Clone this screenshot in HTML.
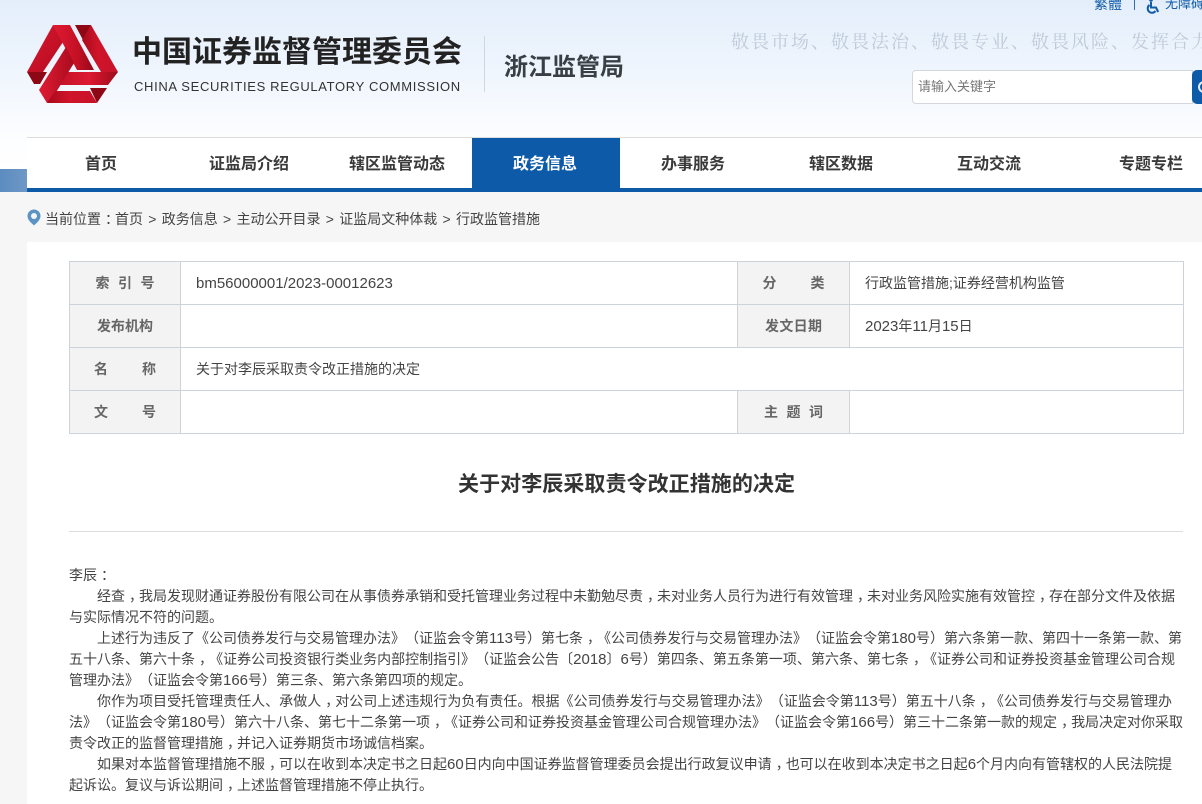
<!DOCTYPE html>
<html lang="zh-CN">
<head>
<meta charset="utf-8">
<title>关于对李辰采取责令改正措施的决定</title>
<style>
html,body{margin:0;padding:0;}
body{width:1202px;height:804px;overflow:hidden;position:relative;background:#f6f6f6;font-family:"Liberation Sans","Noto Sans CJK SC",sans-serif;color:#444;text-spacing-trim:space-all;font-feature-settings:"palt" 0;}
.a{position:absolute;white-space:nowrap;}
#hd{position:absolute;left:0;top:0;width:1202px;height:169px;background:linear-gradient(#e4eefb 0,#edf4fd 60px,#fcfdff 135px,#fff 169px);}
.j{text-align:justify;text-align-last:justify;}
#nav{position:absolute;left:27px;top:137px;width:1175px;height:51px;background:#fff;border-top:1px solid #ddd;box-sizing:border-box;}
#navbar{position:absolute;left:27px;top:188px;width:1175px;height:4px;background:#0d5aa9;}
.n{position:absolute;top:140px;height:50px;line-height:50px;width:148px;text-align:center;font-size:16px;font-weight:bold;color:#3a3a3a;}
#main{position:absolute;left:27px;top:242px;width:1175px;height:562px;background:#fff;}
table{position:absolute;left:69px;top:261px;width:1114px;border-collapse:collapse;table-layout:fixed;}
td{border:1px solid #cdd3da;height:42px;padding:0;font-size:14px;color:#444;box-sizing:border-box;}
td.l{background:#f3f3f3;text-align:center;font-weight:bold;color:#666;}
td.v{padding-left:15px;}
td.l span{display:inline-block;text-align:justify;text-align-last:justify;vertical-align:middle;}
.p{position:absolute;height:21px;line-height:21px;font-size:14px;color:#444;white-space:nowrap;}
.c{position:relative;left:4px;}
.d{font-size:15px;}
</style>
</head>
<body>
<div id="hd"></div>

<svg class="a" style="left:0;top:0" width="130" height="115" viewBox="0 0 130 115">
<defs>
<linearGradient id="g1" x1="0" y1="0" x2="1" y2="1"><stop offset="0" stop-color="#d8172f"/><stop offset="1" stop-color="#b50d20"/></linearGradient>
<linearGradient id="g2" x1="0" y1="0" x2="1" y2="0"><stop offset="0" stop-color="#e01a33"/><stop offset=".6" stop-color="#c41024"/><stop offset="1" stop-color="#96081a"/></linearGradient>
<linearGradient id="g3" x1="0" y1="0" x2="1" y2="0"><stop offset="0" stop-color="#a80a1c"/><stop offset=".45" stop-color="#d0142a"/><stop offset="1" stop-color="#c71229"/></linearGradient>
<linearGradient id="g4" x1="0" y1="0" x2="1" y2="0"><stop offset="0" stop-color="#c6112a"/><stop offset=".5" stop-color="#dc1a32"/><stop offset="1" stop-color="#9c0a1b"/></linearGradient>
<linearGradient id="g5" x1="0" y1="0" x2="1" y2="0"><stop offset="0" stop-color="#e01c34"/><stop offset="1" stop-color="#a90b1e"/></linearGradient>
</defs>
<polygon fill="#8d0714" points="27,72 47,72 40,84 34,84"/>
<polygon fill="#8d0714" points="75,25 91,25 83,40"/>
<polygon fill="#8d0714" points="90,88 107,88 97,103"/>
<polygon fill="url(#g1)" points="53,25 63,42 43,72 27,72"/>
<polygon fill="url(#g2)" points="53,25 70,25 94,70 77,70"/>
<polygon fill="url(#g3)" points="91,25 118,72 101,72 82,40"/>
<polygon fill="url(#g4)" points="118,72 108,85 60,85 67,72"/>
<polygon fill="url(#g5)" points="66,47 74,63 55,94 47,103 39,90"/>
<polygon fill="url(#g3)" points="47,103 55,91 90,91 97,103"/>
</svg>

<div class="a j" style="left:132px;top:31px;width:330px;font-size:30px;line-height:44px;font-weight:bold;color:#222;">中国证券监督管理委员会</div>
<div class="a" style="left:134px;top:79px;font-size:13px;line-height:16px;color:#333;letter-spacing:.66px;">CHINA SECURITIES REGULATORY COMMISSION</div>
<div class="a" style="left:484px;top:36px;width:1px;height:56px;background:#cfd6de;"></div>
<div class="a" style="left:504px;top:50px;font-size:24px;line-height:36px;font-weight:bold;color:#3a3f45;">浙江监管局</div>

<div class="a" style="left:1094px;top:-5px;font-size:14px;line-height:18px;color:#0f5ba8;">繁體</div>
<div class="a" style="left:1134px;top:0;width:1px;height:10px;background:#2d6db0;"></div>
<svg class="a" style="left:1145px;top:-2px" width="17" height="16" viewBox="0 0 17 16"><circle cx="6" cy="2" r="1.800" fill="#0f5ba8"/><path d="M6 4v5.500h5l2.200 4.500 M4.500 7a4.300 4.300 0 1 0 6 6" fill="none" stroke="#0f5ba8" stroke-width="2"/></svg>
<div class="a" style="left:1165px;top:-5px;font-size:13px;line-height:18px;color:#0f5ba8;">无障碍</div>

<div class="a" style="left:731px;top:30px;font-size:18px;line-height:24px;letter-spacing:2px;color:#bfcad8;font-family:'Liberation Serif','Noto Serif CJK SC',serif;">敬畏市场、敬畏法治、敬畏专业、敬畏风险、发挥合力</div>

<div class="a" style="left:912px;top:70px;width:281px;height:34px;background:#fff;border:1px solid #d4d8dd;border-radius:4px 0 0 4px;box-sizing:border-box;"></div>
<div class="a" style="left:918px;top:78px;font-size:13px;line-height:18px;color:#777;">请输入关键字</div>
<div class="a" style="left:1192px;top:70px;width:10px;height:34px;background:#0d5aa9;border-radius:5px 0 0 5px;"></div>
<div class="a" style="left:1198px;top:81px;width:12px;height:12px;border:2px solid #e6eef7;border-radius:50%;box-sizing:border-box;"></div>

<div class="a" style="left:0;top:169px;width:27px;height:23px;background:linear-gradient(90deg,#5c8cc0,#6e98c6);"></div>
<div id="nav"></div>
<div id="navbar"></div>
<div class="a" style="left:472px;top:138px;width:148px;height:50px;background:#0d5aa9;"></div>
<div class="n" style="left:27px;">首页</div>
<div class="n" style="left:175px;">证监局介绍</div>
<div class="n" style="left:323px;">辖区监管动态</div>
<div class="n" style="left:471px;color:#fff;">政务信息</div>
<div class="n" style="left:619px;">办事服务</div>
<div class="n" style="left:767px;">辖区数据</div>
<div class="n" style="left:915px;">互动交流</div>
<div class="n" style="left:1077px;">专题专栏</div>

<svg class="a" style="left:27px;top:209px" width="14" height="17" viewBox="0 0 14 17"><path d="M7 0.5a6.500 6.500 0 0 0-6.500 6.500c0 4 4 7 6.500 9.500c2.500-2.500 6.500-5.500 6.500-9.500a6.500 6.500 0 0 0-6.500-6.500z" fill="#5b93c4"/><circle cx="7" cy="7" r="3" fill="#f6f6f6"/></svg>
<div class="a" style="left:45px;top:209px;font-size:14px;line-height:20px;color:#444;word-spacing:1.400px;">当前位置<span class="c">：</span>首页 &gt; 政务信息 &gt; 主动公开目录 &gt; 证监局文种体裁 &gt; 行政监管措施</div>

<div id="main"></div>

<table>
<colgroup><col style="width:111px"><col style="width:557px"><col style="width:112px"><col style="width:334px"></colgroup>
<tr style="height:43px"><td class="l"><span style="width:59px">索引号</span></td><td class="v"><span style="font-size:15px">bm56000001/2023-00012623</span></td><td class="l"><span style="width:62px">分类</span></td><td class="v">行政监管措施;证券经营机构监管</td></tr>
<tr style="height:43px"><td class="l"><span style="width:56px">发布机构</span></td><td class="v"></td><td class="l"><span style="width:57px">发文日期</span></td><td class="v"><span class="d">2023</span>年<span class="d">11</span>月<span class="d">15</span>日</td></tr>
<tr style="height:43px"><td class="l"><span style="width:62px">名称</span></td><td class="v" colspan="3">关于对李辰采取责令改正措施的决定</td></tr>
<tr style="height:43px"><td class="l"><span style="width:62px">文号</span></td><td class="v"></td><td class="l"><span style="width:59px">主题词</span></td><td class="v"></td></tr>
</table>

<div class="a j" style="left:458px;top:469px;width:337px;font-size:21px;line-height:32px;font-weight:bold;color:#333;">关于对李辰采取责令改正措施的决定</div>
<div class="a" style="left:69px;top:531px;width:1114px;height:1px;background:#ddd;"></div>

<div class="p" style="left:69px;top:565px;">李辰<span class="c">：</span></div>
<div class="p j" style="left:97px;top:586px;width:1078px;">经查<span class="c">，</span>我局发现财通证券股份有限公司在从事债券承销和受托管理业务过程中未勤勉尽责<span class="c">，</span>未对业务人员行为进行有效管理<span class="c">，</span>未对业务风险实施有效管控<span class="c">，</span>存在部分文件及依据</div>
<div class="p j" style="left:69px;top:607px;width:154px;">与实际情况不符的问题。</div>
<div class="p j" style="left:97px;top:628px;width:1085px;">上述行为违反了《公司债券发行与交易管理办法》（证监会令第<span class="d">113</span>号）第七条<span class="c">，</span>《公司债券发行与交易管理办法》（证监会令第<span class="d">180</span>号）第六条第一款、第四十一条第一款、第</div>
<div class="p j" style="left:69px;top:649px;width:1106px;">五十八条、第六十条<span class="c">，</span>《证券公司投资银行类业务内部控制指引》（证监会公告〔<span class="d">2018</span>〕<span class="d">6</span>号）第四条、第五条第一项、第六条、第七条<span class="c">，</span>《证券公司和证券投资基金管理公司合规</div>
<div class="p j" style="left:69px;top:670px;width:400px;">管理办法》（证监会令第<span class="d">166</span>号）第三条、第六条第四项的规定。</div>
<div class="p j" style="left:97px;top:691px;width:1075px;">你作为项目受托管理责任人、承做人<span class="c">，</span>对公司上述违规行为负有责任。根据《公司债券发行与交易管理办法》（证监会令第<span class="d">113</span>号）第五十八条<span class="c">，</span>《公司债券发行与交易管理办</div>
<div class="p j" style="left:69px;top:712px;width:1113px;">法》（证监会令第<span class="d">180</span>号）第六十八条、第七十二条第一项<span class="c">，</span>《证券公司和证券投资基金管理公司合规管理办法》（证监会令第<span class="d">166</span>号）第三十二条第一款的规定<span class="c">，</span>我局决定对你采取</div>
<div class="p j" style="left:69px;top:733px;width:364px;">责令改正的监督管理措施<span class="c">，</span>并记入证券期货市场诚信档案。</div>
<div class="p j" style="left:97px;top:754px;width:1075px;">如果对本监督管理措施不服<span class="c">，</span>可以在收到本决定书之日起<span class="d">60</span>日内向中国证券监督管理委员会提出行政复议申请<span class="c">，</span>也可以在收到本决定书之日起<span class="d">6</span>个月内向有管辖权的人民法院提</div>
<div class="p j" style="left:69px;top:775px;width:364px;">起诉讼。复议与诉讼期间<span class="c">，</span>上述监督管理措施不停止执行。</div>
</body>
</html>
